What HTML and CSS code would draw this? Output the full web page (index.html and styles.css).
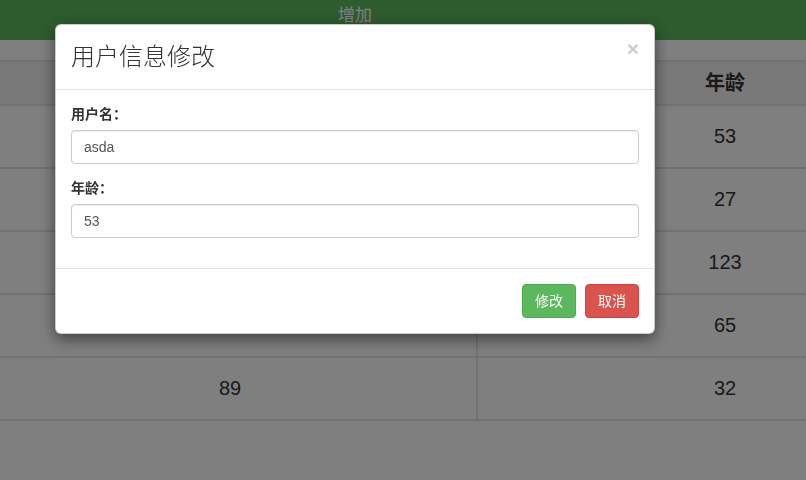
FILE: index.html
```html
<!DOCTYPE html>
<html lang="zh-CN">
<head>
    <meta charset="UTF-8">
    <title>用户列表</title>
    <link rel="stylesheet" href="styles.css">
</head>
<body>

    <div class="add-bar">增加</div>

    <div class="table-wrap">
        <div class="user-table">
            <div class="cell head left"></div>
            <div class="cell head">年龄</div>

            <div class="cell left">asda</div>
            <div class="cell">53</div>
            <div class="cell left"></div>
            <div class="cell">27</div>
            <div class="cell left"></div>
            <div class="cell">123</div>
            <div class="cell left"></div>
            <div class="cell">65</div>
            <div class="cell left">89</div>
            <div class="cell">32</div>
        </div>
    </div>

    <div class="modal-backdrop"></div>

    <div class="modal">
        <div class="modal-content">
            <div class="modal-header">
                <button class="close" type="button">&times;</button>
                <h4 class="modal-title">用户信息修改</h4>
            </div>
            <div class="modal-body">
                <div class="form-group">
                    <label>用户名：</label>
                    <input class="form-control" type="text" value="asda">
                </div>
                <div class="form-group">
                    <label>年龄：</label>
                    <input class="form-control" type="text" value="53">
                </div>
            </div>
            <div class="modal-footer">
                <button class="btn btn-success" type="button">修改</button>
                <button class="btn btn-danger" type="button">取消</button>
            </div>
        </div>
    </div>

</body>
</html>
```

FILE: styles.css
```css
* {
    box-sizing: border-box;
}
body {
    margin: 0;
    overflow: hidden;
    font-family: "Liberation Sans", "Noto Sans CJK SC", sans-serif;
    font-size: 14px;
    line-height: 1.42857;
    color: #333;
    background: #fff;
}

/* top bar */
.add-bar {
    height: 40px;
    padding-left: 338px;
    line-height: 32px;
    font-size: 17px;
    color: #fff;
    background: #5cb85c;
}

/* table */
.table-wrap {
    margin-top: 20px;
    overflow: hidden;
}
.user-table {
    display: grid;
    grid-template-columns: 478px 494px;
    width: 972px;
}
.cell {
    display: flex;
    align-items: center;
    justify-content: center;
    height: 63px;
    font-size: 20px;
    border-bottom: 2px solid #e4e4e4;
}
.cell.left {
    padding-right: 16px;
    border-right: 2px solid #e4e4e4;
}
.cell.head {
    height: 46px;
    font-weight: bold;
    background: #f2f2f2;
    border-top: 2px solid #e4e4e4;
}

/* modal */
.modal-backdrop {
    position: fixed;
    inset: 0;
    background: rgba(0, 0, 0, .5);
}
.modal {
    position: fixed;
    top: 24px;
    left: 55px;
    width: 600px;
}
.modal-content {
    background: #fff;
    border: 1px solid rgba(0, 0, 0, .2);
    border-radius: 6px;
    box-shadow: 0 5px 15px rgba(0, 0, 0, .5);
}
.modal-header {
    padding: 15px;
    border-bottom: 1px solid #e5e5e5;
}
.modal-title {
    margin: 0;
    font-size: 24px;
    font-weight: 300;
    line-height: 34px;
}
.close {
    float: right;
    margin-top: -2px;
    padding: 0;
    border: 0;
    background: transparent;
    font-family: "Liberation Sans", sans-serif;
    font-size: 21px;
    font-weight: bold;
    line-height: 1;
    color: #000;
    opacity: .2;
}
.modal-body {
    padding: 15px;
}
.form-group {
    margin-bottom: 15px;
}
.form-group label {
    display: inline-block;
    margin-bottom: 5px;
    font-weight: bold;
}
.form-control {
    display: block;
    width: 100%;
    height: 34px;
    padding: 6px 12px;
    font-family: inherit;
    font-size: 14px;
    color: #555;
    border: 1px solid #ccc;
    border-radius: 4px;
    box-shadow: inset 0 1px 1px rgba(0, 0, 0, .075);
}
.modal-footer {
    display: flex;
    justify-content: flex-end;
    gap: 9px;
    padding: 15px;
    border-top: 1px solid #e5e5e5;
}
.btn {
    height: 34px;
    padding: 6px 12px;
    font-family: inherit;
    font-size: 14px;
    line-height: 20px;
    color: #fff;
    border: 1px solid transparent;
    border-radius: 4px;
}
.btn-success {
    background: #5cb85c;
    border-color: #4cae4c;
}
.btn-danger {
    background: #d9534f;
    border-color: #d43f3a;
}
```
